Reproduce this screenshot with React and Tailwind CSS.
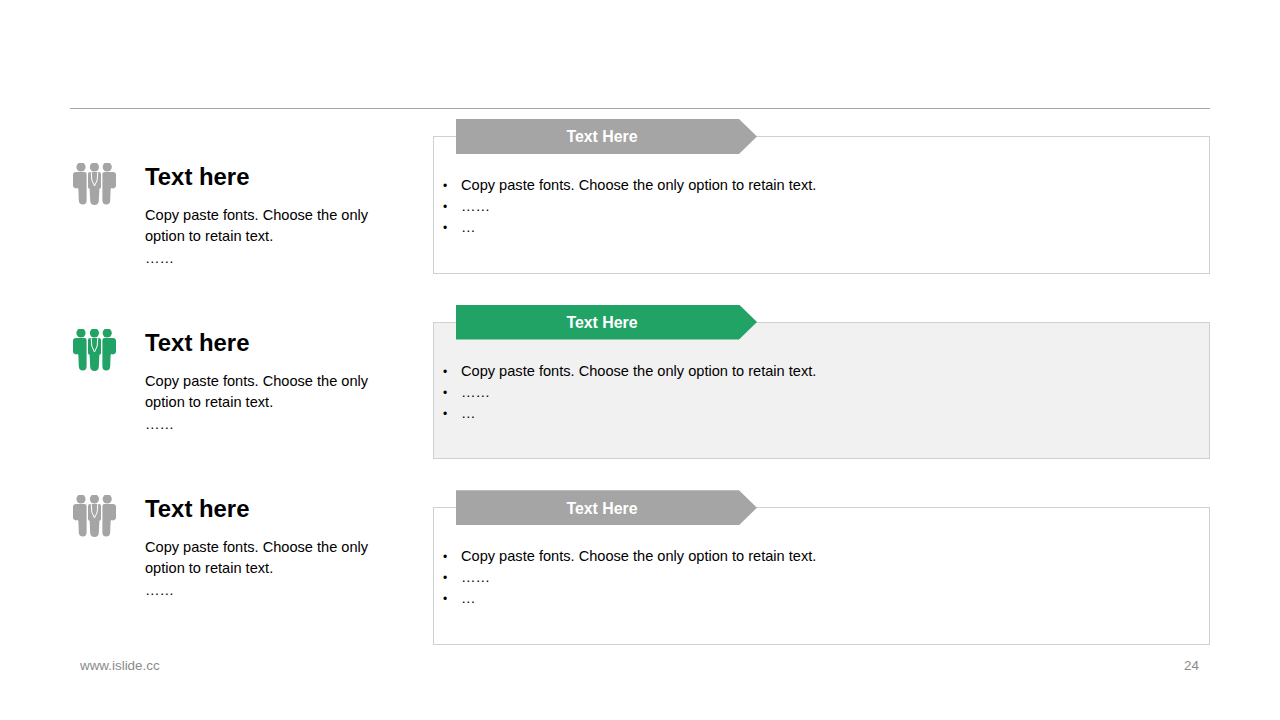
const Team = ({ className }) => (
  <svg viewBox="0 0 43 42" className={className} fill="currentColor">
    <circle cx="8" cy="3.9" r="4.6" />
    <circle cx="21.4" cy="3.9" r="4.6" />
    <circle cx="34.2" cy="3.9" r="4.6" />
    <path d="M3 9H11.6Q13.6 9 13.6 11V37.5Q13.6 41.6 9.8 41.6Q6 41.6 5.8 37.5L5.4 26.5Q5.2 25.4 4.7 24.9Q2.5 26 .9 24.6Q0 23.8 0 22.5V12Q0 9 3 9Z" />
    <path d="M40 9H31.4Q29.4 9 29.4 11V37.5Q29.4 41.6 33.2 41.6Q37 41.6 37.2 37.5L37.6 26.5Q37.8 25.4 38.3 24.9Q40.5 26 42.1 24.6Q43 23.8 43 22.5V12Q43 9 40 9Z" />
    <path d="M15 11Q15 9 17 9H26Q28 9 28 11V24Q28 25.5 26.4 25.8L25.8 38Q25.4 42 21.5 42Q17.6 42 17.2 38L16.6 25.8Q15 25.5 15 24Z" />
    <path d="M18.2 8.5L18.8 17L21.5 23L24.2 17L24.8 8.5" fill="none" stroke="#fff" strokeWidth="1" />
  </svg>
);

const LeftRow = ({ accent }) => (
  <div className="flex h-[166px] pt-[44px]">
    <Team className={`ml-[3px] h-[42px] w-[43px] shrink-0 ${accent ? "text-[#21a366]" : "text-[#a5a5a5]"}`} />
    <div className="ml-[29px]">
      <div className="text-[23.9px] leading-[28px] font-bold text-black">Text here</div>
      <div className="mt-[14px] w-[240px] text-[14.6px] leading-[21.3px] text-black">
        Copy paste fonts. Choose the only option to retain text.
        <br />
        ……
      </div>
    </div>
  </div>
);

const RightRow = ({ accent }) => (
  <div className="h-[185.6px]">
    <div
      className={`relative z-10 ml-[23px] flex h-[35px] w-[301px] items-center justify-center pr-[9px] pt-[1.5px] text-[15.9px] font-bold text-white [clip-path:polygon(0_0,283px_0,100%_50%,283px_100%,0_100%)] ${accent ? "bg-[#21a366]" : "bg-[conic-gradient(#a8a8a8_25%,#a2a2a2_0_50%,#a8a8a8_0_75%,#a2a2a2_0)] bg-[length:2px_2px]"}`}
    >
      Text Here
    </div>
    <div
      className={`-mt-[18px] h-[137.5px] border border-[#d0d0d0] pl-[9px] pt-[38px] text-[14.6px] leading-[21px] text-black ${accent ? "bg-[conic-gradient(#f4f4f4_25%,#eeeeee_0_50%,#f4f4f4_0_75%,#eeeeee_0)] bg-[length:2px_2px]" : "bg-white"}`}
    >
      {["Copy paste fonts. Choose the only option to retain text.", "……", "…"].map((t, i) => (
        <div key={i} className="flex h-[21px] items-baseline">
          <span className="w-[18px] text-[12px] leading-[12px]">•</span>
          <span>{t}</span>
        </div>
      ))}
    </div>
  </div>
);

export default function App() {
  return (
    <div className="flex h-[720px] w-[1280px] flex-col overflow-hidden bg-white px-[70px] pt-[108px] font-['Liberation_Sans',Arial,sans-serif]">
      <div className="h-px bg-[#a6a6a6]" />
      <div className="flex pt-[10px]">
        <div className="w-[363px]">
          <LeftRow />
          <LeftRow accent />
          <LeftRow />
        </div>
        <div className="w-[777px]">
          <RightRow />
          <RightRow accent />
          <RightRow />
        </div>
      </div>
      <div className="-mt-[18px] flex justify-between pl-[10px] pr-[11px] text-[13.4px] leading-[15px] text-[#8a8a8a]">
        <span>www.islide.cc</span>
        <span>24</span>
      </div>
    </div>
  );
}
